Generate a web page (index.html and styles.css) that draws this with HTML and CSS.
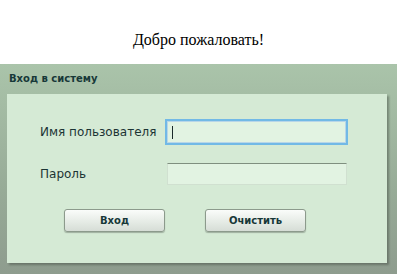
FILE: index.html
```html
<!DOCTYPE html>
<html>
<head>
<meta charset="utf-8">
<link rel="stylesheet" href="styles.css">
</head>
<body>
<div class="welcome">Добро пожаловать!</div>
<div class="login">
  <div class="login-title">Вход в систему</div>
  <div class="login-body">
    <div class="row">
      <label class="label">Имя пользователя</label>
      <div class="input focus"><span class="caret"></span></div>
    </div>
    <div class="row row2">
      <label class="label">Пароль</label>
      <div class="input pass"></div>
    </div>
    <div class="buttons">
      <button class="btn">Вход</button>
      <button class="btn">Очистить</button>
    </div>
  </div>
</div>
</body>
</html>
```

FILE: styles.css
```css
html, body {
  margin: 0;
  padding: 0;
  background: #fff;
  overflow: hidden;
}
.welcome {
  font-family: "Liberation Serif", serif;
  font-size: 16px;
  text-align: center;
  color: #000;
  padding-top: 31px;
  height: 33px;
  line-height: 18px;
}
.login {
  height: 210px;
  background: linear-gradient(#aac4aa, #97ab97 60%, #8e9c8e);
  padding: 0 10px 0 7px;
  box-sizing: border-box;
}
.login-title {
  font-family: "DejaVu Sans", Verdana, sans-serif;
  font-weight: bold;
  font-size: 10px;
  color: #173838;
  padding: 10px 0 0 2px;
  height: 20px;
  line-height: 10px;
}
.login-body {
  background: #d5ead5;
  height: 169px;
  box-shadow: 2px 2px 2px rgba(60, 70, 60, 0.45);
  padding-left: 33px;
  box-sizing: border-box;
  padding-top: 25px;
}
.row {
  display: flex;
  align-items: center;
  height: 26px;
}
.row2 {
  margin-top: 17px;
  height: 24px;
}
.label {
  font-family: "DejaVu Sans", Verdana, sans-serif;
  font-size: 12px;
  color: #1c3434;
  width: 125px;
}
.input {
  background: #e2f3e2;
  box-sizing: border-box;
  display: flex;
  align-items: center;
}
.input.focus {
  width: 183px;
  height: 26px;
  border: 2px solid #72b9e6;
  box-shadow: inset 0 0 0 1px #b8d6e8;
  padding-left: 5px;
}
.caret {
  width: 1px;
  height: 13px;
  background: #1a2a2a;
}
.input.pass {
  width: 180px;
  height: 22px;
  margin-left: 2px;
  border: 1px solid #d0e0d0;
  border-top: 1px solid #7f8f7f;
}
.buttons {
  display: flex;
  gap: 40px;
  margin-top: 23px;
  padding-left: 24px;
}
.btn {
  width: 101px;
  height: 23px;
  border: 1px solid #8c9a8c;
  border-radius: 3px;
  background: linear-gradient(#fafcfa, #e4eae4 60%, #d6ddd6);
  font-family: "DejaVu Sans", Verdana, sans-serif;
  font-weight: bold;
  font-size: 10px;
  color: #173838;
  padding: 0;
  box-shadow: 0 1px 1px rgba(80, 90, 80, 0.4);
}
```
